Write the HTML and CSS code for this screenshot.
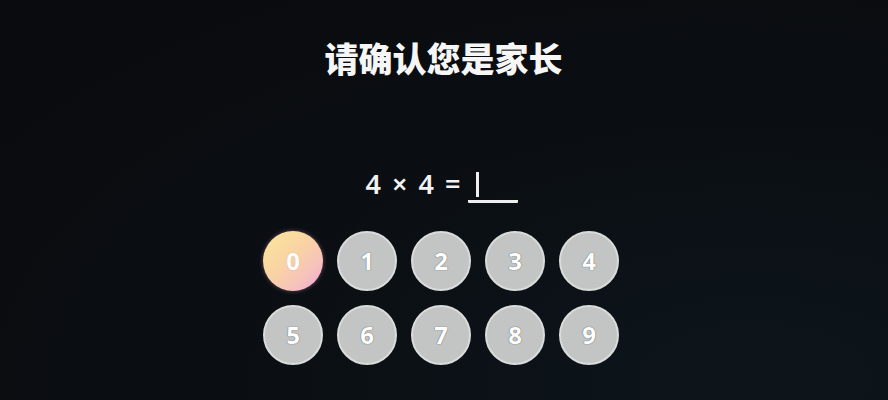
FILE: index.html
```html
<!DOCTYPE html>
<html lang="zh">
<head>
<meta charset="utf-8">
<link rel="stylesheet" href="styles.css">
</head>
<body>
<main class="screen">
  <h1 class="title">请确认您是家长</h1>
  <div class="equation">
    <span class="expr">4 × 4 =</span>
    <span class="answer"><span class="cursor"></span></span>
  </div>
  <div class="keypad">
    <button class="key key-active">0</button>
    <button class="key">1</button>
    <button class="key">2</button>
    <button class="key">3</button>
    <button class="key">4</button>
    <button class="key">5</button>
    <button class="key">6</button>
    <button class="key">7</button>
    <button class="key">8</button>
    <button class="key">9</button>
  </div>
</main>
</body>
</html>
```
FILE: styles.css
```css
html, body {
  margin: 0;
  padding: 0;
}
body {
  width: 888px;
  height: 400px;
  overflow: hidden;
  background: radial-gradient(ellipse at 85% 95%, #0d151b 0%, #0a0d11 60%, #090b0e 100%);
  font-family: "Noto Sans", "Noto Sans CJK SC", sans-serif;
  color: #fff;
}
.screen {
  display: flex;
  flex-direction: column;
  align-items: center;
}
.title {
  margin: 36px 0 0 -1px;
  font-family: "Noto Sans CJK SC", sans-serif;
  font-size: 34px;
  font-weight: 900;
  line-height: 44px;
  color: #f6f6f6;
}
.equation {
  margin-top: 89px;
  display: flex;
  align-items: flex-end;
  gap: 8px;
  height: 34px;
  margin-left: -4px;
}
.expr {
  font-family: "Noto Sans", sans-serif;
  font-size: 27px;
  font-weight: 600;
  line-height: 30px;
  word-spacing: 4px;
  padding-bottom: 4px;
  color: #f2f2f2;
}
.answer {
  display: flex;
  width: 50px;
  height: 31px;
  border-bottom: 3px solid #eeeeee;
  border-radius: 1px;
  padding-left: 8px;
  box-sizing: border-box;
}
.cursor {
  display: block;
  width: 3px;
  height: 25px;
  background: #f0f0f0;
}
.keypad {
  margin-top: 28px;
  margin-left: -6px;
  display: grid;
  grid-template-columns: repeat(5, 60px);
  grid-auto-rows: 60px;
  column-gap: 14px;
  row-gap: 14px;
}
.key {
  width: 60px;
  height: 60px;
  padding: 0;
  border-radius: 50%;
  border: 2px solid #d9dcdb;
  background: #c2c5c4;
  color: #ffffff;
  font-family: "Noto Sans", sans-serif;
  font-size: 24px;
  font-weight: 700;
  line-height: 1;
  display: flex;
  align-items: center;
  justify-content: center;
  text-shadow: 0 0 1px #6b6e70, 0 0 1px #6b6e70;
}
.key-active {
  border: none;
  background: linear-gradient(135deg, #fbe79a 0%, #f9d3a4 45%, #f6c1bd 75%, #ef9fd4 100%);
  box-shadow: 0 0 4px rgba(240, 160, 200, 0.4);
  text-shadow: 0 0 1px #c9a07a;
}
```
